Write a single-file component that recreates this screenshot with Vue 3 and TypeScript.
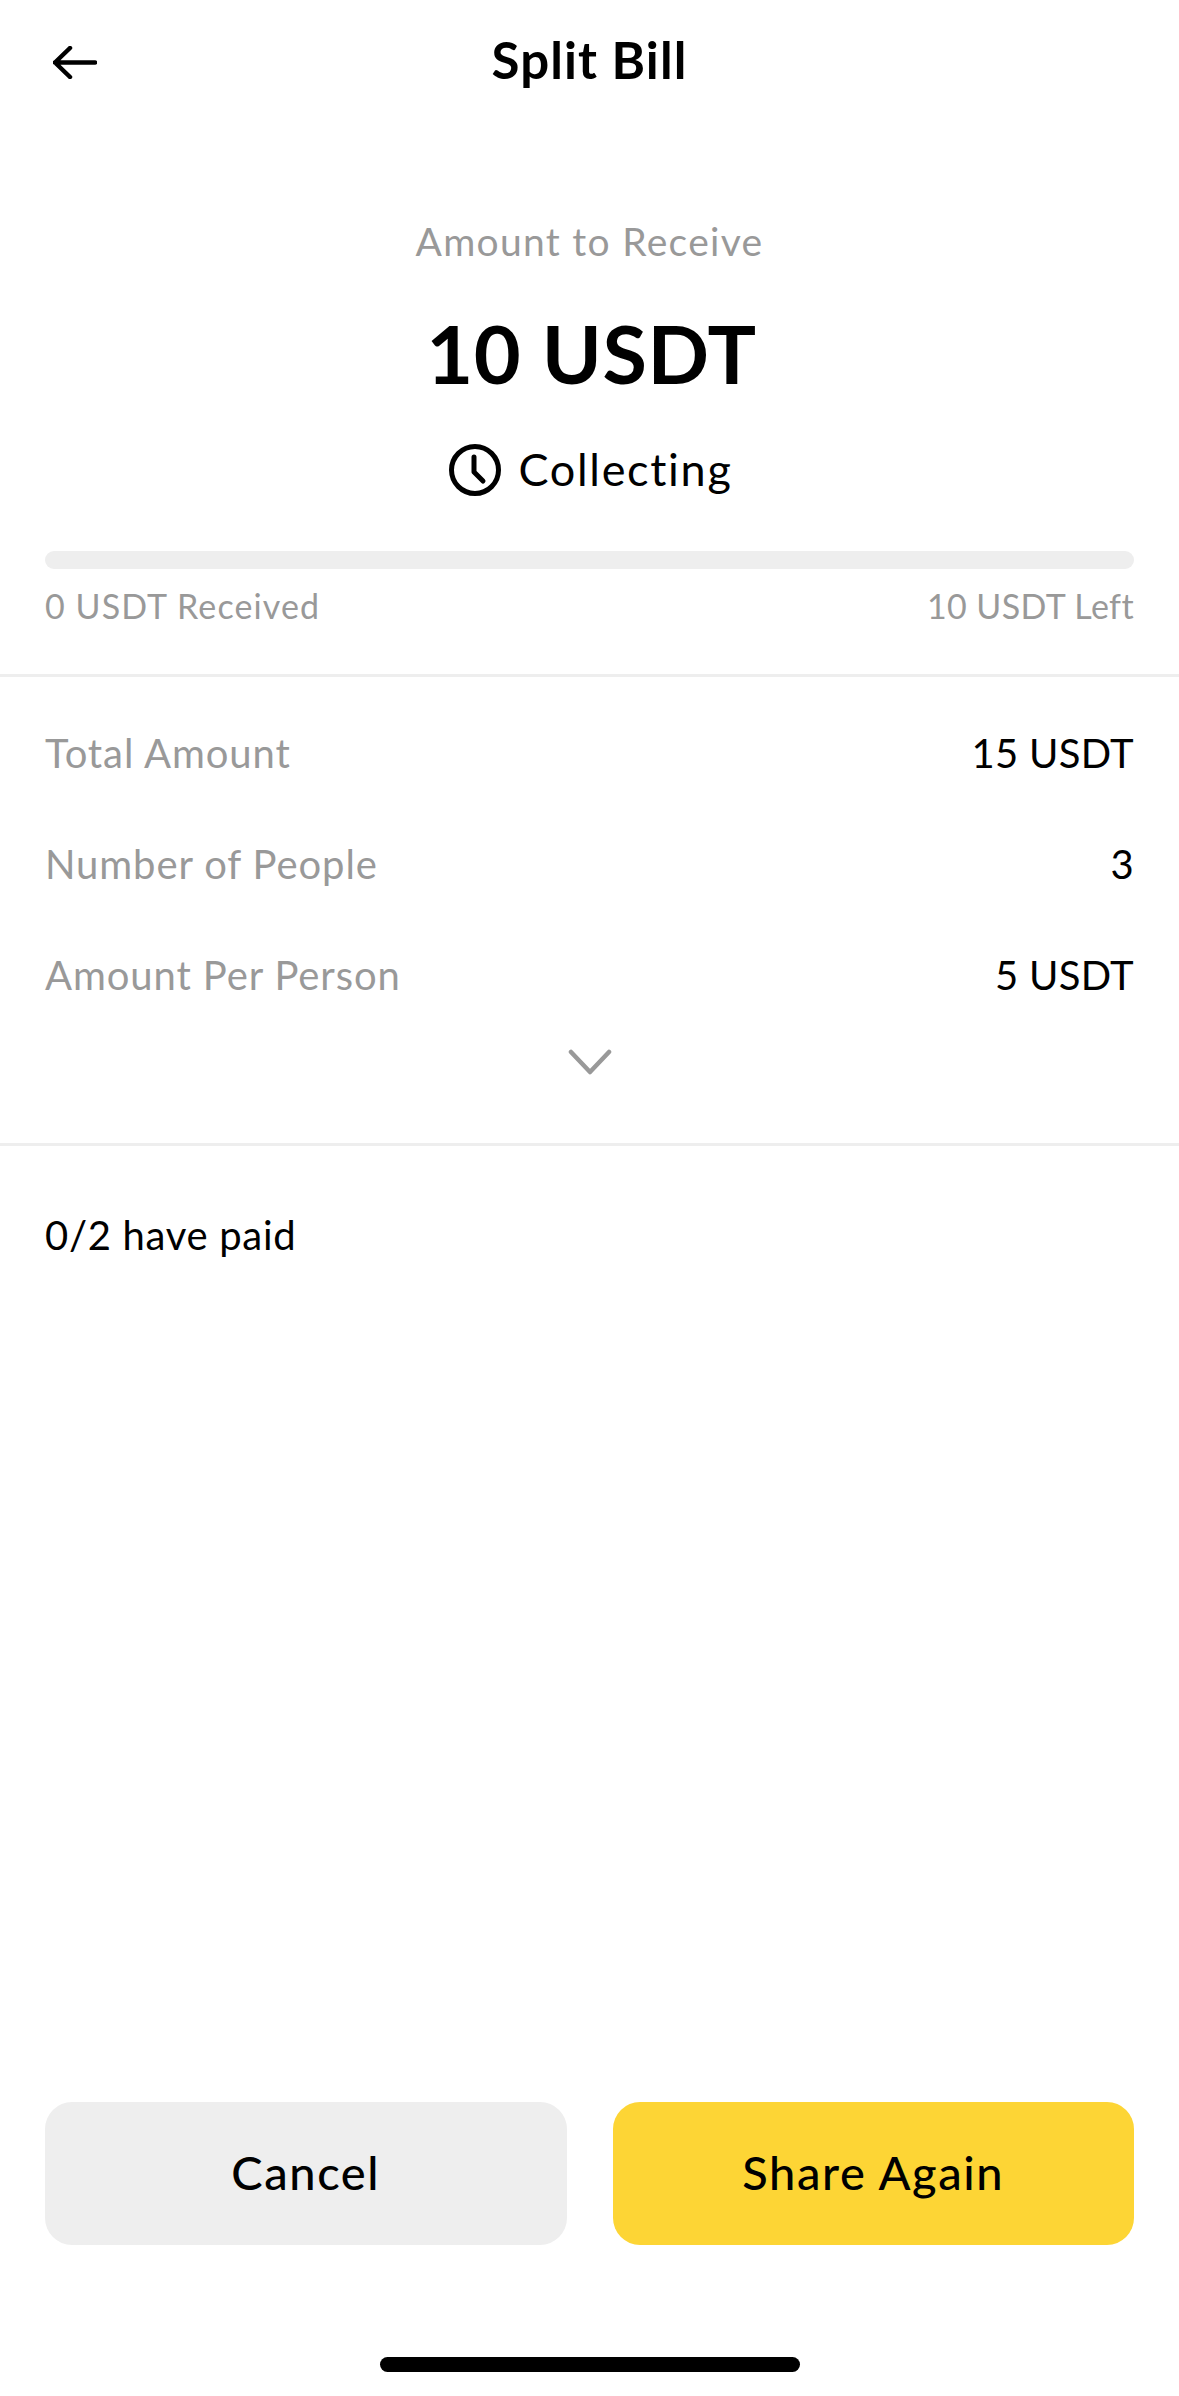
<script setup lang="ts">
interface Row {
  label: string
  value: string
}

const rows: Row[] = [
  { label: 'Total Amount', value: '15 USDT' },
  { label: 'Number of People', value: '3' },
  { label: 'Amount Per Person', value: '5 USDT' },
]
</script>

<template>
  <div class="page">
    <header class="nav">
      <svg class="back" width="44" height="33" viewBox="0 0 44 33" fill="none">
        <path d="M2 16.5H42M17 2L2 16.5L17 31" stroke="#000" stroke-width="4.5" stroke-linecap="round" stroke-linejoin="round" />
      </svg>
      <h1 class="title">Split Bill</h1>
    </header>

    <section class="summary">
      <p class="receive">Amount to Receive</p>
      <p class="amount">10 USDT</p>
      <div class="status">
        <svg width="52" height="52" viewBox="0 0 52 52" fill="none">
          <circle cx="26" cy="26" r="23.5" stroke="#000" stroke-width="5" />
          <path d="M25 13V28L34 37" stroke="#000" stroke-width="5" stroke-linecap="round" stroke-linejoin="round" />
        </svg>
        <span class="status-text">Collecting</span>
      </div>
    </section>

    <section class="progress">
      <div class="bar"></div>
      <div class="progress-labels">
        <span>0 USDT Received</span>
        <span class="left">10 USDT Left</span>
      </div>
    </section>

    <section class="details">
      <div v-for="row in rows" :key="row.label" class="row">
        <span class="row-label">{{ row.label }}</span>
        <span class="row-value">{{ row.value }}</span>
      </div>
      <svg class="chevron" width="44" height="26" viewBox="0 0 44 26" fill="none">
        <path d="M3 3L22 23L41 3" stroke="#999" stroke-width="4.5" stroke-linecap="round" stroke-linejoin="round" />
      </svg>
    </section>

    <p class="paid">0/2 have paid</p>

    <footer class="footer">
      <div class="actions">
        <button class="btn cancel">Cancel</button>
        <button class="btn share">Share Again</button>
      </div>
      <div class="home"></div>
    </footer>
  </div>
</template>

<style>
body {
  background: #fff;
}
</style>

<style scoped>
.page {
  width: 1179px;
  height: 2396px;
  display: flex;
  flex-direction: column;
  font-family: Lato, "Liberation Sans", sans-serif;
  color: #000;
  background: #fff;
}

.nav {
  position: relative;
  height: 124px;
  padding-bottom: 5px;
  box-sizing: border-box;
  display: flex;
  align-items: center;
  justify-content: center;
}

.back {
  position: absolute;
  left: 53px;
  top: 46px;
}

.title {
  margin: 0;
  font-size: 51px;
  font-weight: 700;
  letter-spacing: 1.1px;
}

.summary {
  padding-top: 92px;
  display: flex;
  flex-direction: column;
  align-items: center;
}

.summary p {
  margin: 0;
}

.receive {
  font-size: 39px;
  line-height: 50px;
  letter-spacing: 1.3px;
  color: #999;
}

.amount {
  margin-top: 37px !important;
  padding-left: 4px;
  font-size: 81px;
  font-weight: 700;
  line-height: 100px;
  letter-spacing: 0.6px;
}

.status {
  margin-top: 37px;
  padding-left: 3px;
  height: 60px;
  display: flex;
  align-items: center;
  gap: 17px;
  font-size: 45px;
}

.status-text {
  margin-top: -3px;
  letter-spacing: 1.7px;
}

.progress {
  margin-top: 51px;
  padding: 0 45px 48px;
  border-bottom: 3px solid #eee;
}

.bar {
  height: 18px;
  border-radius: 9px;
  background: #eee;
}

.progress-labels {
  margin-top: 17px;
  display: flex;
  justify-content: space-between;
  font-size: 34px;
  line-height: 40px;
  letter-spacing: 1.1px;
  color: #999;
}

.left {
  letter-spacing: 0.4px;
}

.details {
  padding: 46px 45px 68px;
  display: flex;
  flex-direction: column;
  gap: 51px;
  border-bottom: 3px solid #eee;
}

.row {
  height: 60px;
  display: flex;
  align-items: center;
  justify-content: space-between;
  font-size: 40px;
}

.row-label {
  color: #999;
  letter-spacing: 0.9px;
}

.row-value {
  letter-spacing: 0.3px;
}

.chevron {
  align-self: center;
  margin-top: -7px;
}

.paid {
  margin: 64px 45px 0;
  font-size: 40px;
  line-height: 50px;
  letter-spacing: 0.7px;
}

.footer {
  margin-top: auto;
  padding: 0 45px 24px;
  display: flex;
  flex-direction: column;
  align-items: center;
}

.actions {
  width: 100%;
  display: grid;
  grid-template-columns: 1fr 1fr;
  gap: 46px;
}

.btn {
  height: 143px;
  padding: 0 0 4px;
  border: none;
  border-radius: 27px;
  font-family: inherit;
  font-size: 47px;
  font-weight: 500;
  letter-spacing: 1.6px;
  color: #000;
}

.cancel {
  background: #eee;
}

.share {
  background: #fdd535;
}

.home {
  margin-top: 112px;
  width: 420px;
  height: 15px;
  border-radius: 8px;
  background: #000;
}
</style>
